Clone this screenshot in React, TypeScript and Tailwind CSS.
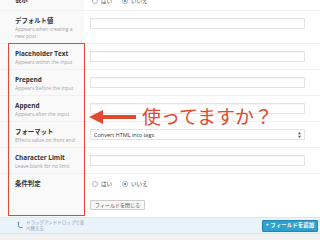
import React from "react";

const FONT = { fontFamily: '"Open Sans", "Noto Sans CJK JP", sans-serif' };

function Label({ title, desc }: { title: string; desc?: string[] }) {
  return (
    <div className="w-[84px] shrink-0 bg-[#f9f9f9] pl-[15px] pr-[4px] pt-[7px]">
      <div className="text-[6.4px] leading-[6px] font-bold text-[#333]">{title}</div>
      {desc && (
        <div className="mt-[2px] text-[5px] leading-[7px] text-[#a3a3a3]">
          {desc.map((d) => (
            <div key={d}>{d}</div>
          ))}
        </div>
      )}
    </div>
  );
}

function TextInput() {
  return <div className="h-[11px] border border-[#e4e4e4] bg-white shadow-[inset_0_1px_1px_rgba(0,0,0,0.04)]" />;
}

function Radio({ checked, label }: { checked?: boolean; label: string }) {
  return (
    <div className="flex items-center gap-[3px]">
      <span className="flex h-[6px] w-[6px] items-center justify-center rounded-full border border-[#b4b9be] bg-white">
        {checked && <span className="h-[2.5px] w-[2.5px] rounded-full bg-[#1e8cbe]" />}
      </span>
      <span className="text-[5.5px] leading-[6px] text-[#444]">{label}</span>
    </div>
  );
}

function Row({ title, desc, children, h = "h-[26px]" }: { title: string; desc?: string[]; children?: React.ReactNode; h?: string }) {
  return (
    <div className={`flex ${h} border-t border-[#f0f0f0]`}>
      <Label title={title} desc={desc} />
      <div className="flex-1 pl-[6px] pr-[15px] pt-[7px]">{children}</div>
    </div>
  );
}

export default function App() {
  return (
    <div className="relative h-[240px] w-[320px] overflow-hidden bg-white" style={FONT}>
      <div className="flex flex-col">
        {/* partially visible top row */}
        <div className="flex h-[10px] overflow-hidden">
          <div className="w-[84px] shrink-0 bg-[#f9f9f9] pl-[15px]">
            <div className="mt-[-3px] text-[6.4px] leading-[6px] font-bold text-[#333]">表示</div>
          </div>
          <div className="flex flex-1 items-start pl-[8px]">
            <div className="mt-[-2px] flex gap-[10px]">
              <Radio label="はい" />
              <Radio checked label="いいえ" />
            </div>
          </div>
        </div>

        <Row title="デフォルト値" desc={["Appears when creating a", "new post"]} h="h-[33px]">
          <TextInput />
        </Row>
        <Row title="Placeholder Text" desc={["Appears within the input"]}>
          <TextInput />
        </Row>
        <Row title="Prepend" desc={["Appears before the input"]}>
          <TextInput />
        </Row>
        <Row title="Append" desc={["Appears after the input"]}>
          <TextInput />
        </Row>
        <Row title="フォーマット" desc={["Effects value on front end"]}>
          <div className="flex h-[11px] items-center justify-between border border-[#e4e4e4] bg-white pl-[3px] pr-[3px]">
            <span className="text-[5.5px] leading-[6px] text-[#333]">Convert HTML into tags</span>
            <svg width="3" height="6" viewBox="0 0 3 6">
              <path d="M1.5 0 L3 2.2 H0 Z M1.5 6 L3 3.8 H0 Z" fill="#555" />
            </svg>
          </div>
        </Row>
        <Row title="Character Limit" desc={["Leave blank for no limit"]}>
          <TextInput />
        </Row>
        <div className="flex h-[22px] border-t border-[#f0f0f0]">
          <Label title="条件判定" />
          <div className="flex flex-1 items-start gap-[10px] pl-[8px] pt-[7px]">
            <Radio label="はい" />
            <Radio checked label="いいえ" />
          </div>
        </div>
        <div className="flex h-[22px]">
          <div className="w-[84px] shrink-0 bg-[#f9f9f9]" />
          <div className="flex flex-1 items-start pl-[6px] pt-[5px]">
            <div className="flex h-[10px] items-center rounded-[1px] border border-[#ccc] bg-[#f7f7f7] px-[4px] text-[5px] leading-[6px] text-[#555]">
              フィールドを閉じる
            </div>
          </div>
        </div>

        {/* footer */}
        <div className="flex h-[16px] items-center justify-between border-t border-[#dde7ef] bg-[#eaf2fa] pl-[17px] pr-[2px]">
          <div className="flex items-start gap-[3px]">
            <svg width="6" height="8" viewBox="0 0 6 8" className="mt-[1px]">
              <path d="M1.5 0.5 L0.3 2 L2.7 2 Z" fill="#6d8aa5" />
              <path d="M1.5 2 V4.5 Q1.5 6.5 3.5 6.5 H5.5" stroke="#6d8aa5" strokeWidth="1" fill="none" />
            </svg>
            <div className="text-[4.5px] leading-[5.5px] text-[#7e9bb7]">
              <div>ドラッグアンドドロップで並</div>
              <div>べ替える</div>
            </div>
          </div>
          <div className="flex h-[12px] w-[56px] items-center justify-center rounded-[1px] border border-[#2385b3] bg-[#2ea2cc] text-[5.5px] font-bold text-white">
            + フィールドを追加
          </div>
        </div>
        <div className="h-[7px] border-t border-[#e0e0e0] bg-[#f1f1f1]" />
      </div>

      {/* annotation overlay */}
      <div className="absolute left-[8px] top-[43px] h-[173px] w-[77px] border-[1.5px] border-[#e2492f]" />
      <svg className="absolute left-[88px] top-[109px]" width="50" height="17" viewBox="0 0 50 17">
        <path d="M1 8 L15 1 L15 6 L48 6 L48 10 L15 10 L15 15 Z" fill="#e2492f" />
      </svg>
      <div
        className="absolute left-[142px] top-[104px] text-[19px] leading-[24px] text-[#e2492f]"
        style={{ fontFamily: '"Noto Sans CJK JP", sans-serif' }}
      >
        使ってますか？
      </div>
    </div>
  );
}
